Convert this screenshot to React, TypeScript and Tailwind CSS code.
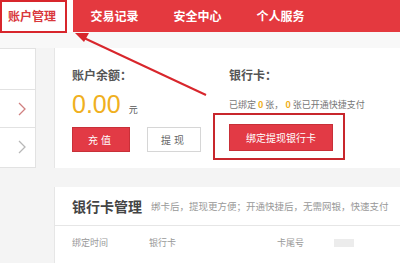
import React from 'react';

const font = { fontFamily: '"Noto Sans CJK SC", "Noto Sans", sans-serif' };

const Chevron: React.FC<{ color: string }> = ({ color }) => (
  <svg width="8" height="14" viewBox="0 0 8 14" fill="none">
    <path d="M1 1l6 6-6 6" stroke={color} strokeWidth="1.3" />
  </svg>
);

const App: React.FC = () => {
  return (
    <div className="relative w-[400px] h-[263px] overflow-hidden bg-[#f4f4f4]" style={font}>
      {/* top nav */}
      <div className="flex h-[32px]">
        <div className="w-[73px] bg-white flex items-center pl-[8px] text-[12px] font-bold text-[#d9383c]">
          账户管理
        </div>
        <div className="flex-1 bg-[#e4393f] flex items-center text-white text-[12px] font-bold">
          <div className="w-[83px] text-center">交易记录</div>
          <div className="w-[83px] text-center">安全中心</div>
          <div className="w-[83px] text-center">个人服务</div>
        </div>
      </div>
      <div className="h-[16px] bg-[#f8f8f8]" />

      <div className="flex gap-[18px]">
        {/* sidebar */}
        <div className="w-[36px] bg-white border border-l-0 border-[#e2e2e2] flex flex-col">
          <div className="h-[41px] border-b border-[#e2e2e2]" />
          <div className="h-[38px] border-b border-[#e2e2e2] flex items-center justify-end pr-[9px]">
            <Chevron color="#d08080" />
          </div>
          <div className="h-[38px] flex items-center justify-end pr-[9px]">
            <Chevron color="#b8b8b8" />
          </div>
        </div>

        {/* balance card */}
        <div className="flex-1 h-[120px] bg-white border-l border-[#e6e6e6] flex pl-[17px] pt-[20px]">
          <div className="w-[157px] flex flex-col">
            <div className="text-[12px] font-bold text-[#555] leading-[14px]">账户余额：</div>
            <div className="flex items-end mt-[7px] h-[28px]">
              <span className="text-[25px] leading-[26px] text-[#f0b020]" style={{ fontFamily: '"Liberation Sans", Arial, sans-serif' }}>0.00</span>
              <span className="text-[9px] text-[#555] ml-[8px] mb-[1px]">元</span>
            </div>
            <div className="flex gap-[17px] mt-[10px]">
              <div className="w-[58px] h-[25px] bg-[#e23a45] border border-[#c83038] text-white text-[10px] flex items-center justify-center tracking-[3px]">
                充值
              </div>
              <div className="w-[54px] h-[25px] bg-white border border-[#d6d6d6] text-[#666] text-[10px] flex items-center justify-center tracking-[3px]">
                提现
              </div>
            </div>
          </div>
          <div className="flex flex-col">
            <div className="text-[12px] font-bold text-[#555] leading-[14px]">银行卡：</div>
            <div className="text-[9px] text-[#777] mt-[17px] leading-[12px]">
              已绑定 <span className="text-[#f0b020] font-bold">0</span> 张， <span className="text-[#f0b020] font-bold">0</span> 张已开通快捷支付
            </div>
            <div className="mt-[13px] w-[104px] h-[27px] bg-[#e23a45] border border-[#c83038] text-white text-[10px] flex items-center justify-center">
              绑定提现银行卡
            </div>
          </div>
        </div>
      </div>

      {/* bank card manage */}
      <div className="ml-[54px] mt-[19px] bg-white h-[80px] border-l border-[#e6e6e6]">
        <div className="h-[39px] flex items-center pl-[17px] border-b border-[#e6e6e6]">
          <span className="text-[14px] font-bold text-[#444]">银行卡管理</span>
          <span className="text-[9.5px] text-[#999] ml-[9px]">绑卡后，提现更方便；开通快捷后，无需网银，快速支付</span>
        </div>
        <div className="flex items-center h-[34px] pl-[17px] text-[9px] text-[#999]">
          <span className="w-[77px]">绑定时间</span>
          <span className="w-[128px]">银行卡</span>
          <span>卡尾号</span>
          <span className="ml-[30px] w-[20px] h-[8px] bg-[#ececec]" />
        </div>
      </div>

      {/* annotations */}
      <div className="absolute left-0 top-0 w-[67px] h-[33px] border-2 border-[#d8262c]" />
      <div className="absolute left-[213px] top-[113px] w-[132px] h-[47px] border-2 border-[#c8262c]" />
      <svg className="absolute left-0 top-0" width="400" height="263" viewBox="0 0 400 263">
        <line x1="206" y1="95" x2="84" y2="38" stroke="#d8262c" strokeWidth="2" />
        <polygon points="75,33 89,33 84,42" fill="#d8262c" />
      </svg>
    </div>
  );
};

export default App;
